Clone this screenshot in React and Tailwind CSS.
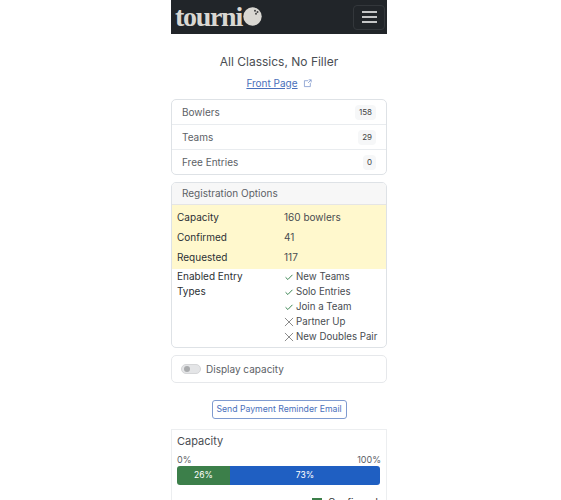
const CHECK = ["New Teams", "Solo Entries", "Join a Team"];
const CROSS = ["Partner Up", "New Doubles Pair"];

function Check() {
  return (
    <svg width="10" height="10" viewBox="0 0 16 16" fill="none" stroke="#2e7d46" strokeWidth="1.5">
      <path d="M2.5 8.5 L6.2 12 L13.5 4.5" />
    </svg>
  );
}
function Cross() {
  return (
    <svg width="10" height="10" viewBox="0 0 16 16" fill="none" stroke="#666" strokeWidth="1.2">
      <path d="M1.5 1.5 L14.5 14.5 M14.5 1.5 L1.5 14.5" />
    </svg>
  );
}

function Row({ label, count, border, h }) {
  return (
    <div className={`${h} flex items-center justify-between pl-[10px] pr-[10px] ${border ? "border-b border-[#e9ecef]" : ""}`}>
      <span className="text-[#5c6166]">{label}</span>
      <span className="text-[8px] leading-[13px] text-[#444] bg-[#f6f7f8] rounded-[4px] px-[4px] py-[1px]">{count}</span>
    </div>
  );
}

function Info({ label, value }) {
  return (
    <div className="flex h-[20px] items-center">
      <span className="w-[107px] text-[#2b3035]">{label}</span>
      <span className="text-[#484c51]">{value}</span>
    </div>
  );
}

export default function App() {
  return (
    <div className="w-[216px] ml-[171px] h-[500px] overflow-hidden text-[10px] bg-white" style={{ fontFamily: '"Inter", "Liberation Sans", sans-serif' }}>
      <div className="h-[34px] bg-[#212529] flex items-center justify-between pl-[4px] pr-[2px]">
        <div className="flex items-center">
          <span className="text-[28px] leading-[34px] font-bold text-[#d9d7d2] tracking-[-1.3px] -mt-[1px]" style={{ fontFamily: '"Liberation Serif", serif' }}>tourni</span>
          <svg width="19" height="19" viewBox="0 0 19 19" className="-mt-[1px] ml-[1px]">
            <circle cx="9.5" cy="9.5" r="9.2" fill="#d9d7d2" />
            <circle cx="12" cy="3.8" r="1" fill="#444" />
            <circle cx="14.5" cy="5" r="1" fill="#444" />
            <circle cx="13" cy="6.8" r="1" fill="#444" />
          </svg>
        </div>
        <div className="w-[32px] h-[25px] border border-[#33373b] rounded-[4px] flex flex-col items-center justify-center gap-[3.5px]">
          <span className="w-[15px] h-[1.5px] bg-[#c4c5c6]"></span>
          <span className="w-[15px] h-[1.5px] bg-[#c4c5c6]"></span>
          <span className="w-[15px] h-[1.5px] bg-[#c4c5c6]"></span>
        </div>
      </div>

      <div className="mt-[20px] text-center text-[12px] leading-[16px] text-[#4a4e53]">All Classics, No Filler</div>
      <div className="mt-[4px] flex justify-center items-center gap-[5px] text-[#4a70bb] h-[18px]">
        <span className="underline">Front Page</span>
        <svg width="9" height="9" viewBox="0 0 16 16" fill="none" stroke="#7d97cc" strokeWidth="1.4">
          <path d="M9 3 H2.5 V13.5 H13 V7 M9 7 L14.5 1.5 M10 1.5 H14.5 V6" />
        </svg>
      </div>

      <div className="mt-[7px] border border-[#dee2e6] rounded-[5px] overflow-hidden">
        <Row label="Bowlers" count="158" border h="h-[25px]" />
        <Row label="Teams" count="29" border h="h-[25px]" />
        <Row label="Free Entries" count="0" h="h-[24px]" />
      </div>

      <div className="mt-[7px] border border-[#dee2e6] rounded-[5px] overflow-hidden">
        <div className="h-[22px] bg-[#f7f7f7] border-b border-[#e5e5e5] flex items-center px-[10px] text-[#5c6166]">Registration Options</div>
        <div className="bg-[#fff8cd] px-[5px] py-[2px]">
          <Info label="Capacity" value="160 bowlers" />
          <Info label="Confirmed" value="41" />
          <Info label="Requested" value="117" />
        </div>
        <div className="flex px-[5px] pb-[3px]">
          <div className="w-[107px] leading-[15px] text-[#2b3035]">Enabled Entry<br />Types</div>
          <div className="leading-[15px] text-[9.7px] text-[#484c51] whitespace-nowrap">
            {CHECK.map((t) => (
              <div key={t} className="flex items-center gap-[2px]"><Check /><span>{t}</span></div>
            ))}
            {CROSS.map((t) => (
              <div key={t} className="flex items-center gap-[2px]"><Cross /><span>{t}</span></div>
            ))}
          </div>
        </div>
      </div>

      <div className="mt-[7px] h-[28px] border border-[#e6e8eb] rounded-[5px] flex items-center px-[9px] gap-[5px] text-[#5c6166]">
        <span className="w-[20px] h-[10px] rounded-full bg-[#e4e5e7] border border-[#d5d6d8] flex items-center pl-[2px]">
          <span className="w-[6px] h-[6px] rounded-full bg-[#a9abad]"></span>
        </span>
        <span>Display capacity</span>
      </div>

      <div className="mt-[17px] flex justify-center">
        <div className="h-[19px] w-[135px] border border-[#7f9bd0] rounded-[3px] flex items-center justify-center text-[8.7px] text-[#4a70bb]">Send Payment Reminder Email</div>
      </div>

      <div className="mt-[10px] border border-[#eceef0] pl-[5px] pr-[6px] pt-[3px] h-[100px]">
        <div className="text-[11px] leading-[16px] text-[#4a4e53]">Capacity</div>
        <div className="mt-[5px] flex justify-between text-[9px] leading-[11px] text-[#5c6166] -mr-[1px]">
          <span>0%</span><span>100%</span>
        </div>
        <div className="mt-[1px] flex h-[19px] w-[203px] rounded-[3px] overflow-hidden text-[8.5px] text-white">
          <div className="w-[53px] bg-[#3c7f4a] flex items-center justify-center">26%</div>
          <div className="flex-1 bg-[#1f5fc2] flex items-center justify-center">73%</div>
        </div>
        <div className="mt-[10px] ml-[135px] flex items-center gap-[6px] text-[10px] text-[#333]">
          <span className="w-[10px] h-[10px] bg-[#3c7f4a]"></span>
          <span>Confirmed</span>
        </div>
      </div>
    </div>
  );
}
